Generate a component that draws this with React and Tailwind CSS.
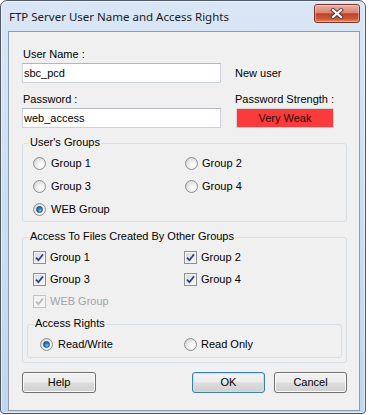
import React from 'react';

const Radio = ({ checked }) => (
  <span className="flex h-[13px] w-[13px] shrink-0 items-center justify-center rounded-full border border-[#8e8f8f] bg-[radial-gradient(circle_at_65%_65%,#ffffff_0%,#f2f2f2_35%,#c8c8c8_100%)]">
    {checked && (
      <span className="h-[7px] w-[7px] rounded-full border border-[#1b4c7a] bg-[radial-gradient(circle_at_65%_70%,#74c8f2_0%,#2a7cba_50%,#0e3d6b_100%)]" />
    )}
  </span>
);

const Check = ({ disabled }) => (
  <span
    className={`flex h-[13px] w-[13px] shrink-0 items-center justify-center border ${
      disabled
        ? 'border-[#c4c4c4] bg-[#f4f4f4]'
        : 'border-[#8f8f8f] bg-[linear-gradient(135deg,#d8d8d8,#fbfbfb)] shadow-[inset_0_0_0_1px_#f4f4f4]'
    }`}
  >
    <svg width="11" height="11" viewBox="0 0 11 11">
      <path d="M2 5.6 L4.4 8.2 L9 2.4" fill="none" stroke={disabled ? '#b8b8b8' : '#2b3f8e'} strokeWidth="1.7" />
    </svg>
  </span>
);

const Opt = ({ control, label, disabled, gap }) => (
  <div className="flex items-center">
    {control}
    <span className={`${gap} leading-[13px] ${disabled ? 'text-[#a3a3a3]' : ''}`}>{label}</span>
  </div>
);

const Group = ({ title, className, children }) => (
  <div className={`rounded-[3px] border border-[#d5dfe5] ${className}`}>
    <div className="-mt-[8px] ml-[6px] w-fit bg-[#f0f0f0] px-[1px] leading-[13px]">{title}</div>
    {children}
  </div>
);

const Btn = ({ children, def, className }) => (
  <button
    className={`h-[21px] rounded-[3px] border leading-[13px] text-black bg-[linear-gradient(#f3f3f3_0%,#ebebeb_48%,#dddddd_52%,#cfcfcf_100%)] ${
      def ? 'border-[#3c7fb1] shadow-[inset_0_0_0_1px_#b9e3f8]' : 'border-[#707070] shadow-[inset_0_0_0_1px_#fbfbfb]'
    } ${className}`}
  >
    {children}
  </button>
);

export default function App() {
  return (
    <div className="h-[415px] w-[369px] bg-white">
      <div className="flex h-[414px] w-[366px] flex-col rounded-t-[7px] rounded-b-[4px] border border-[#4f5966] bg-[linear-gradient(#d9e6f6,#c2d6ee)] pl-[7px] pr-[5px] shadow-[inset_0_0_0_1px_rgba(255,255,255,0.55)]">
        <div className="flex h-[30px] items-start justify-between">
          <div className="ml-[1px] mt-[8px] font-['Noto_Sans',sans-serif] text-[11.5px] leading-[16px] text-[#1a1a1a]">
            FTP Server User Name and Access Rights
          </div>
          <div className="mt-[3px] flex h-[19px] w-[46px] items-center justify-center rounded-[3px] border border-[#7d3327] bg-[linear-gradient(#eab0a2_0%,#dc8470_45%,#c2412a_52%,#cc5638_80%,#e08a62_100%)] shadow-[inset_0_0_0_1px_rgba(255,255,255,0.35)]">
            <svg width="14" height="11" viewBox="0 0 14 11">
              <path d="M3 2 L11 9 M11 2 L3 9" stroke="#4a3a38" strokeWidth="4" strokeLinecap="square" />
              <path d="M3 2 L11 9 M11 2 L3 9" stroke="#ffffff" strokeWidth="2.2" strokeLinecap="square" />
            </svg>
          </div>
        </div>

        <div className="flex h-[380px] flex-col border border-[#8d9db0] bg-[#f0f0f0] pl-[13px] pr-[12px] pt-[16px] font-['Liberation_Sans',Arial,sans-serif] text-[11px] text-black">
          <div className="ml-[1px] leading-[13px]">User Name :</div>
          <div className="mt-[2px] flex items-center">
            <input
              readOnly
              value="sbc_pcd"
              className="h-[20px] w-[199px] border border-[#cdd2d8] border-t-[#b3b7bd] bg-white pl-[1px] leading-[13px] outline-none"
            />
            <span className="ml-[14px] leading-[13px]">New user</span>
          </div>
          <div className="mt-[10px] flex leading-[13px]">
            <span className="w-[213px] pl-[1px]">Password :</span>
            <span>Password Strength :</span>
          </div>
          <div className="mt-[2px] flex items-center">
            <input
              readOnly
              value="web_access"
              className="h-[20px] w-[199px] border border-[#cdd2d8] border-t-[#b3b7bd] bg-white pl-[1px] leading-[13px] outline-none"
            />
            <div className="ml-[15px] flex h-[20px] w-[98px] items-center justify-center border border-[#d6d6d6] bg-[#fb3b3b] leading-[13px] text-[#2a0a0a]">
              Very Weak
            </div>
          </div>

          <Group title="User's Groups" className="mt-[15px]">
            <div className="mt-[3px] grid grid-cols-[152px_1fr] pl-[10px]">
              <div className="flex h-[23px] items-center"><Opt control={<Radio />} label="Group 1" gap="ml-[5px]" /></div>
              <div className="flex h-[23px] items-center"><Opt control={<Radio />} label="Group 2" gap="ml-[4px]" /></div>
              <div className="flex h-[23px] items-center"><Opt control={<Radio />} label="Group 3" gap="ml-[5px]" /></div>
              <div className="flex h-[23px] items-center"><Opt control={<Radio />} label="Group 4" gap="ml-[4px]" /></div>
              <div className="flex h-[23px] items-center"><Opt control={<Radio checked />} label="WEB Group" gap="ml-[5px]" /></div>
            </div>
          </Group>

          <Group title="Access To Files Created By Other Groups" className="mt-[15px] pb-[4px]">
            <div className="mt-[3px] grid grid-cols-[151px_1fr] pl-[10px]">
              <div className="flex h-[22px] items-center"><Opt control={<Check />} label="Group 1" gap="ml-[4px]" /></div>
              <div className="flex h-[22px] items-center"><Opt control={<Check />} label="Group 2" gap="ml-[4px]" /></div>
              <div className="flex h-[22px] items-center"><Opt control={<Check />} label="Group 3" gap="ml-[4px]" /></div>
              <div className="flex h-[22px] items-center"><Opt control={<Check />} label="Group 4" gap="ml-[4px]" /></div>
              <div className="flex h-[22px] items-center"><Opt control={<Check disabled />} label="WEB Group" gap="ml-[4px]" disabled /></div>
            </div>
            <Group title="Access Rights" className="mx-[4px] mt-[12px] pb-[1px]">
              <div className="mt-[3px] grid grid-cols-[144px_1fr] pl-[12px]">
                <div className="flex h-[23px] items-center"><Opt control={<Radio checked />} label="Read/Write" gap="ml-[5px]" /></div>
                <div className="flex h-[23px] items-center"><Opt control={<Radio />} label="Read Only" gap="ml-[4px]" /></div>
              </div>
            </Group>
          </Group>

          <div className="mt-[9px] flex justify-between">
            <Btn className="w-[74px]">Help</Btn>
            <div className="flex gap-[9px]">
              <Btn def className="w-[73px]">OK</Btn>
              <Btn className="w-[73px]">Cancel</Btn>
            </div>
          </div>
        </div>
      </div>
    </div>
  );
}
